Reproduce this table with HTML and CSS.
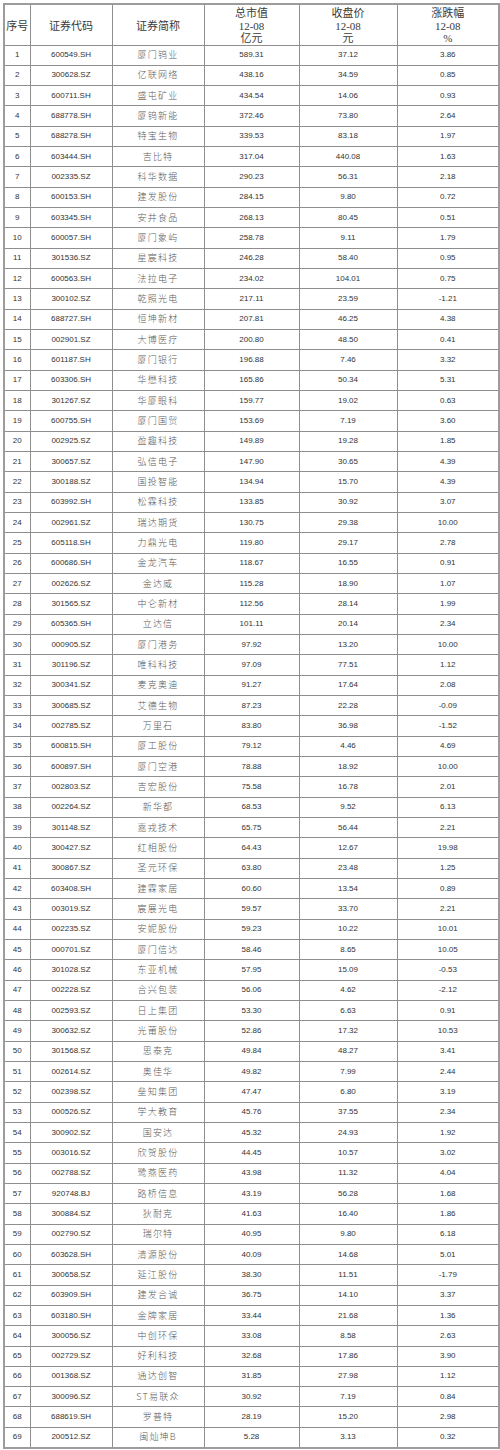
FILE: index.html
```html
<!DOCTYPE html>
<html lang="zh-CN">
<head>
<meta charset="utf-8">
<title>厦门上市公司市值表</title>
<link rel="stylesheet" href="styles.css">
</head>
<body>
<table class="sheet">
<colgroup>
<col class="c-no"><col class="c-code"><col class="c-name"><col class="c-cap"><col class="c-price"><col class="c-chg">
</colgroup>
<thead>
<tr><th>序号</th><th>证券代码</th><th>证券简称</th><th>总市值<br>12-08<br>亿元</th><th>收盘价<br>12-08<br>元</th><th>涨跌幅<br>12-08<br>%</th></tr>
</thead>
<tbody>
<tr><td>1</td><td>600549.SH</td><td class="name">厦门钨业</td><td>589.31</td><td>37.12</td><td>3.86</td></tr>
<tr><td>2</td><td>300628.SZ</td><td class="name">亿联网络</td><td>438.16</td><td>34.59</td><td>0.85</td></tr>
<tr><td>3</td><td>600711.SH</td><td class="name">盛屯矿业</td><td>434.54</td><td>14.06</td><td>0.93</td></tr>
<tr><td>4</td><td>688778.SH</td><td class="name">厦钨新能</td><td>372.46</td><td>73.80</td><td>2.64</td></tr>
<tr><td>5</td><td>688278.SH</td><td class="name">特宝生物</td><td>339.53</td><td>83.18</td><td>1.97</td></tr>
<tr><td>6</td><td>603444.SH</td><td class="name">吉比特</td><td>317.04</td><td>440.08</td><td>1.63</td></tr>
<tr><td>7</td><td>002335.SZ</td><td class="name">科华数据</td><td>290.23</td><td>56.31</td><td>2.18</td></tr>
<tr><td>8</td><td>600153.SH</td><td class="name">建发股份</td><td>284.15</td><td>9.80</td><td>0.72</td></tr>
<tr><td>9</td><td>603345.SH</td><td class="name">安井食品</td><td>268.13</td><td>80.45</td><td>0.51</td></tr>
<tr><td>10</td><td>600057.SH</td><td class="name">厦门象屿</td><td>258.78</td><td>9.11</td><td>1.79</td></tr>
<tr><td>11</td><td>301536.SZ</td><td class="name">星宸科技</td><td>246.28</td><td>58.40</td><td>0.95</td></tr>
<tr><td>12</td><td>600563.SH</td><td class="name">法拉电子</td><td>234.02</td><td>104.01</td><td>0.75</td></tr>
<tr><td>13</td><td>300102.SZ</td><td class="name">乾照光电</td><td>217.11</td><td>23.59</td><td>-1.21</td></tr>
<tr><td>14</td><td>688727.SH</td><td class="name">恒坤新材</td><td>207.81</td><td>46.25</td><td>4.38</td></tr>
<tr><td>15</td><td>002901.SZ</td><td class="name">大博医疗</td><td>200.80</td><td>48.50</td><td>0.41</td></tr>
<tr><td>16</td><td>601187.SH</td><td class="name">厦门银行</td><td>196.88</td><td>7.46</td><td>3.32</td></tr>
<tr><td>17</td><td>603306.SH</td><td class="name">华懋科技</td><td>165.86</td><td>50.34</td><td>5.31</td></tr>
<tr><td>18</td><td>301267.SZ</td><td class="name">华厦眼科</td><td>159.77</td><td>19.02</td><td>0.63</td></tr>
<tr><td>19</td><td>600755.SH</td><td class="name">厦门国贸</td><td>153.69</td><td>7.19</td><td>3.60</td></tr>
<tr><td>20</td><td>002925.SZ</td><td class="name">盈趣科技</td><td>149.89</td><td>19.28</td><td>1.85</td></tr>
<tr><td>21</td><td>300657.SZ</td><td class="name">弘信电子</td><td>147.90</td><td>30.65</td><td>4.39</td></tr>
<tr><td>22</td><td>300188.SZ</td><td class="name">国投智能</td><td>134.94</td><td>15.70</td><td>4.39</td></tr>
<tr><td>23</td><td>603992.SH</td><td class="name">松霖科技</td><td>133.85</td><td>30.92</td><td>3.07</td></tr>
<tr><td>24</td><td>002961.SZ</td><td class="name">瑞达期货</td><td>130.75</td><td>29.38</td><td>10.00</td></tr>
<tr><td>25</td><td>605118.SH</td><td class="name">力鼎光电</td><td>119.80</td><td>29.17</td><td>2.78</td></tr>
<tr><td>26</td><td>600686.SH</td><td class="name">金龙汽车</td><td>118.67</td><td>16.55</td><td>0.91</td></tr>
<tr><td>27</td><td>002626.SZ</td><td class="name">金达威</td><td>115.28</td><td>18.90</td><td>1.07</td></tr>
<tr><td>28</td><td>301565.SZ</td><td class="name">中仑新材</td><td>112.56</td><td>28.14</td><td>1.99</td></tr>
<tr><td>29</td><td>605365.SH</td><td class="name">立达信</td><td>101.11</td><td>20.14</td><td>2.34</td></tr>
<tr><td>30</td><td>000905.SZ</td><td class="name">厦门港务</td><td>97.92</td><td>13.20</td><td>10.00</td></tr>
<tr><td>31</td><td>301196.SZ</td><td class="name">唯科科技</td><td>97.09</td><td>77.51</td><td>1.12</td></tr>
<tr><td>32</td><td>300341.SZ</td><td class="name">麦克奥迪</td><td>91.27</td><td>17.64</td><td>2.08</td></tr>
<tr><td>33</td><td>300685.SZ</td><td class="name">艾德生物</td><td>87.23</td><td>22.28</td><td>-0.09</td></tr>
<tr><td>34</td><td>002785.SZ</td><td class="name">万里石</td><td>83.80</td><td>36.98</td><td>-1.52</td></tr>
<tr><td>35</td><td>600815.SH</td><td class="name">厦工股份</td><td>79.12</td><td>4.46</td><td>4.69</td></tr>
<tr><td>36</td><td>600897.SH</td><td class="name">厦门空港</td><td>78.88</td><td>18.92</td><td>10.00</td></tr>
<tr><td>37</td><td>002803.SZ</td><td class="name">吉宏股份</td><td>75.58</td><td>16.78</td><td>2.01</td></tr>
<tr><td>38</td><td>002264.SZ</td><td class="name">新华都</td><td>68.53</td><td>9.52</td><td>6.13</td></tr>
<tr><td>39</td><td>301148.SZ</td><td class="name">嘉戎技术</td><td>65.75</td><td>56.44</td><td>2.21</td></tr>
<tr><td>40</td><td>300427.SZ</td><td class="name">红相股份</td><td>64.43</td><td>12.67</td><td>19.98</td></tr>
<tr><td>41</td><td>300867.SZ</td><td class="name">圣元环保</td><td>63.80</td><td>23.48</td><td>1.25</td></tr>
<tr><td>42</td><td>603408.SH</td><td class="name">建霖家居</td><td>60.60</td><td>13.54</td><td>0.89</td></tr>
<tr><td>43</td><td>003019.SZ</td><td class="name">宸展光电</td><td>59.57</td><td>33.70</td><td>2.21</td></tr>
<tr><td>44</td><td>002235.SZ</td><td class="name">安妮股份</td><td>59.23</td><td>10.22</td><td>10.01</td></tr>
<tr><td>45</td><td>000701.SZ</td><td class="name">厦门信达</td><td>58.46</td><td>8.65</td><td>10.05</td></tr>
<tr><td>46</td><td>301028.SZ</td><td class="name">东亚机械</td><td>57.95</td><td>15.09</td><td>-0.53</td></tr>
<tr><td>47</td><td>002228.SZ</td><td class="name">合兴包装</td><td>56.06</td><td>4.62</td><td>-2.12</td></tr>
<tr><td>48</td><td>002593.SZ</td><td class="name">日上集团</td><td>53.30</td><td>6.63</td><td>0.91</td></tr>
<tr><td>49</td><td>300632.SZ</td><td class="name">光莆股份</td><td>52.86</td><td>17.32</td><td>10.53</td></tr>
<tr><td>50</td><td>301568.SZ</td><td class="name">思泰克</td><td>49.84</td><td>48.27</td><td>3.41</td></tr>
<tr><td>51</td><td>002614.SZ</td><td class="name">奥佳华</td><td>49.82</td><td>7.99</td><td>2.44</td></tr>
<tr><td>52</td><td>002398.SZ</td><td class="name">垒知集团</td><td>47.47</td><td>6.80</td><td>3.19</td></tr>
<tr><td>53</td><td>000526.SZ</td><td class="name">学大教育</td><td>45.76</td><td>37.55</td><td>2.34</td></tr>
<tr><td>54</td><td>300902.SZ</td><td class="name">国安达</td><td>45.32</td><td>24.93</td><td>1.92</td></tr>
<tr><td>55</td><td>003016.SZ</td><td class="name">欣贺股份</td><td>44.45</td><td>10.57</td><td>3.02</td></tr>
<tr><td>56</td><td>002788.SZ</td><td class="name">鹭燕医药</td><td>43.98</td><td>11.32</td><td>4.04</td></tr>
<tr><td>57</td><td>920748.BJ</td><td class="name">路桥信息</td><td>43.19</td><td>56.28</td><td>1.68</td></tr>
<tr><td>58</td><td>300884.SZ</td><td class="name">狄耐克</td><td>41.63</td><td>16.40</td><td>1.86</td></tr>
<tr><td>59</td><td>002790.SZ</td><td class="name">瑞尔特</td><td>40.95</td><td>9.80</td><td>6.18</td></tr>
<tr><td>60</td><td>603628.SH</td><td class="name">清源股份</td><td>40.09</td><td>14.68</td><td>5.01</td></tr>
<tr><td>61</td><td>300658.SZ</td><td class="name">延江股份</td><td>38.30</td><td>11.51</td><td>-1.79</td></tr>
<tr><td>62</td><td>603909.SH</td><td class="name">建发合诚</td><td>36.75</td><td>14.10</td><td>3.37</td></tr>
<tr><td>63</td><td>603180.SH</td><td class="name">金牌家居</td><td>33.44</td><td>21.68</td><td>1.36</td></tr>
<tr><td>64</td><td>300056.SZ</td><td class="name">中创环保</td><td>33.08</td><td>8.58</td><td>2.63</td></tr>
<tr><td>65</td><td>002729.SZ</td><td class="name">好利科技</td><td>32.68</td><td>17.86</td><td>3.90</td></tr>
<tr><td>66</td><td>001368.SZ</td><td class="name">通达创智</td><td>31.85</td><td>27.98</td><td>1.12</td></tr>
<tr><td>67</td><td>300096.SZ</td><td class="name">ST易联众</td><td>30.92</td><td>7.19</td><td>0.84</td></tr>
<tr><td>68</td><td>688619.SH</td><td class="name">罗普特</td><td>28.19</td><td>15.20</td><td>2.98</td></tr>
<tr><td>69</td><td>200512.SZ</td><td class="name">闽灿坤B</td><td>5.28</td><td>3.13</td><td>0.32</td></tr>
</tbody>
</table>
</body>
</html>
```

FILE: styles.css
```css
html, body {
  margin: 0;
  padding: 0;
  background: #ffffff;
}

.sheet {
  margin: 3px 0 0 3px;
  width: 495px;
  table-layout: fixed;
  border-collapse: collapse;
  border: 2px solid #9c9c9c;
}

.c-no { width: 26px; }
.c-code { width: 82px; }
.c-name { width: 92px; }
.c-cap { width: 95px; }
.c-price { width: 98px; }
.c-chg { width: 102px; }

.sheet th,
.sheet td {
  border: 1px solid #8e8e8e;
  padding: 0;
  text-align: center;
  vertical-align: middle;
  white-space: nowrap;
  overflow: hidden;
}

.sheet thead tr {
  height: 40px;
}

.sheet th {
  padding-top: 2px;
  font-family: "Liberation Serif", "Noto Sans CJK SC", serif;
  font-weight: normal;
  font-size: 11px;
  line-height: 12.5px;
  color: #3a3a3a;
}

.sheet tbody tr {
  height: 20.33px;
}

.sheet td {
  font-family: "Liberation Sans", Arial, sans-serif;
  font-size: 8px;
  line-height: 10px;
  color: #333333;
}

.sheet td.name {
  font-family: "Noto Sans CJK SC", sans-serif;
  font-size: 9px;
  letter-spacing: 1.2px;
  color: #5a5a5a;
  font-weight: 300;
}
```
